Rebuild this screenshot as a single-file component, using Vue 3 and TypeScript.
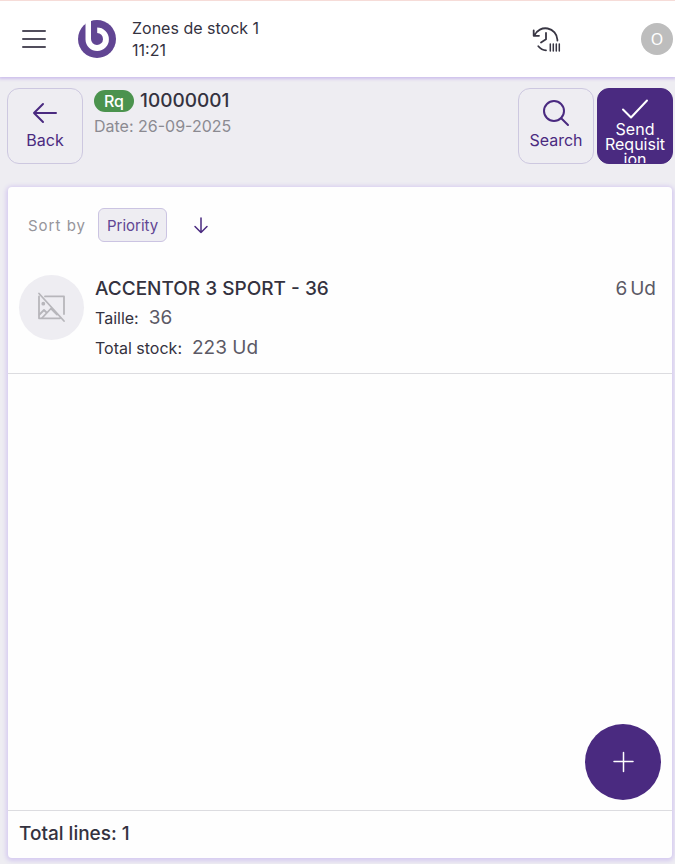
<script setup lang="ts">
import { ref } from 'vue'

interface Attribute {
  label: string
  value: string
}

interface Line {
  id: number
  name: string
  quantity: number
  unit: string
  attributes: Attribute[]
}

const descending = ref(true)

const lines = ref<Line[]>([
  {
    id: 1,
    name: 'ACCENTOR 3 SPORT - 36',
    quantity: 6,
    unit: 'Ud',
    attributes: [
      { label: 'Taille:', value: '36' },
      { label: 'Total stock:', value: '223 Ud' },
    ],
  },
])
</script>

<template>
  <div class="page">
    <header class="topbar">
      <button class="plain menu" type="button" aria-label="Menu">
        <svg width="24" height="20" viewBox="0 0 24 20">
          <path d="M1 2H23M1 10H23M1 18H23" fill="none" stroke="#514e5c" stroke-width="2" stroke-linecap="round" />
        </svg>
      </button>
      <svg class="logo" width="38" height="38" viewBox="0 0 38 38" aria-hidden="true">
        <circle cx="19" cy="19" r="19" fill="#614593" />
        <path d="M7.500 0V19.500A11.700 11.700 0 1 0 19.200 7.600V13A6 6 0 1 1 13 19V0Z" fill="#fff" />
      </svg>
      <div class="place">
        <span>Zones de stock 1</span>
        <span>11:21</span>
      </div>
      <button class="plain history" type="button" aria-label="Scan history">
        <svg width="29" height="26" viewBox="0 0 29 26" fill="none" stroke="#383643" stroke-width="1.800" stroke-linecap="round" stroke-linejoin="round">
          <path d="M1.700 4.500V9.800H7M2.500 9.300A12 12 0 0 1 25.400 13.700V14.500" />
          <path d="M14 7V13.300L9 16.500M6.300 20.300Q9.500 24.200 14 24.300" />
          <path d="M18.300 18V25M21.300 18V25M24.300 18V25M27.300 18V25" stroke-width="1.500" />
        </svg>
      </button>
      <button class="avatar" type="button" aria-label="Account">O</button>
    </header>

    <main class="content">
      <section class="actions">
        <button class="tile" type="button">
          <svg width="28" height="28" viewBox="0 0 28 28" fill="none" stroke="#4a2a80" stroke-width="2" stroke-linecap="round" stroke-linejoin="round">
            <path d="M12 5L3 14L12 23M3 14H25" />
          </svg>
          <span>Back</span>
        </button>
        <div class="document">
          <h1><span class="badge">Rq</span>10000001</h1>
          <p>Date: 26-09-2025</p>
        </div>
        <div class="group">
          <button class="tile" type="button">
            <svg width="28" height="28" viewBox="0 0 28 28" fill="none" stroke="#4a2a80" stroke-width="2" stroke-linecap="round">
              <circle cx="12" cy="12" r="10" />
              <path d="M19.200 19.200L26 26" />
            </svg>
            <span>Search</span>
          </button>
          <button class="tile primary" type="button">
            <svg width="28" height="28" viewBox="0 0 28 28" fill="none" stroke="#fff" stroke-width="2" stroke-linecap="round" stroke-linejoin="round">
              <path d="M2 15.500L10 23.500L26 6.500" />
            </svg>
            <span>Send Requisition</span>
          </button>
        </div>
      </section>

      <section class="card">
        <div class="sort">
          <span class="sort-label">Sort by</span>
          <button class="chip" type="button">Priority</button>
          <button class="plain direction" type="button" aria-label="Sort direction" @click="descending = !descending">
            <svg width="16" height="18" viewBox="0 0 16 18" :class="{ up: !descending }">
              <path d="M8 2V16.500M2 10.500L8 16.500L14 10.500" fill="none" stroke="#4a2a80" stroke-width="1.500" stroke-linecap="round" stroke-linejoin="round" />
            </svg>
          </button>
        </div>

        <ul class="lines">
          <li v-for="line in lines" :key="line.id" class="line">
            <span class="thumb">
              <svg width="29" height="31" viewBox="0 0 29 31" fill="none" stroke="#b7b6bb" stroke-width="1.800" stroke-linecap="round" stroke-linejoin="round">
                <path d="M2 4.500V26.300H23M8 4.400H27V22M2 1.500L27 29" />
                <path d="M2.500 22.500L7 18L9.500 20.500M5 26L14 16.500L20 22.500" />
                <circle cx="6.300" cy="11.700" r="1" fill="#b7b6bb" />
              </svg>
            </span>
            <div class="info">
              <h2>{{ line.name }}</h2>
              <dl>
                <div v-for="item in line.attributes" :key="item.label">
                  <dt>{{ item.label }}</dt>
                  <dd>{{ item.value }}</dd>
                </div>
              </dl>
            </div>
            <div class="quantity"><span>{{ line.quantity }}</span><span>{{ line.unit }}</span></div>
          </li>
        </ul>

        <div class="space">
          <button class="add" type="button" aria-label="Add line">
            <svg width="22" height="22" viewBox="0 0 22 22">
              <path d="M11.500 1.500V20.500M2 10.500H21" fill="none" stroke="#fff" stroke-width="1.500" stroke-linecap="round" />
            </svg>
          </button>
        </div>

        <footer class="total">Total lines: {{ lines.length }}</footer>
      </section>
    </main>
  </div>
</template>

<style>
body {
  background: #eeedf2;
}
</style>

<style scoped>
* {
  box-sizing: border-box;
}

.page {
  display: flex;
  flex-direction: column;
  min-height: 100vh;
  color: #34323f;
  font-family: Inter, 'Liberation Sans', sans-serif;
  font-size: 16px;
}

button {
  margin: 0;
  padding: 0;
  font: inherit;
  cursor: pointer;
}

svg {
  display: block;
  flex: none;
}

h1,
h2,
p,
ul,
dl,
dd {
  margin: 0;
  padding: 0;
}

.plain {
  border: 0;
  background: none;
}

.topbar {
  display: flex;
  align-items: center;
  height: 77px;
  padding: 0 2px 0 22px;
  border-top: 1px solid #f6dcd8;
  background: #fff;
  box-shadow: 0 1px 3px 1px #cdbfec;
}

.logo {
  margin-left: 32px;
}

.place {
  display: flex;
  flex-direction: column;
  margin-left: 16px;
  line-height: 22px;
}

.history {
  margin-left: auto;
}

.avatar {
  width: 32px;
  height: 32px;
  margin-left: 80px;
  border: 0;
  border-radius: 50%;
  background: #bdbdbd;
  color: #fff;
  font-family: 'Noto Sans', sans-serif;
}

.content {
  display: flex;
  flex: 1;
  flex-direction: column;
  gap: 23px;
  padding: 11px 2px 6px 7px;
}

.actions {
  display: flex;
  gap: 11px;
}

.tile {
  display: flex;
  flex: none;
  flex-direction: column;
  align-items: center;
  gap: 3px;
  width: 76px;
  height: 76px;
  padding-top: 10px;
  border: 1px solid #cdc8e0;
  border-radius: 12px;
  background: none;
  color: #4a2a80;
  line-height: 20px;
}

.primary {
  gap: 0;
  padding: 5px 6px 0;
  border-color: #4a2a80;
  background: #4a2a80;
  color: #fff;
  line-height: 15px;
  overflow: hidden;
}

.primary span {
  width: 100%;
  word-break: break-word;
}

.document {
  flex: 1;
}

h1 {
  display: flex;
  align-items: center;
  gap: 6px;
  font-size: 19px;
  font-weight: 500;
  line-height: 26px;
}

.badge {
  width: 40px;
  border-radius: 11px;
  background: #4b934e;
  color: #fff;
  font-size: 16px;
  line-height: 22px;
  text-align: center;
}

.document p {
  color: #8b8a91;
  line-height: 24px;
}

.group {
  display: flex;
  gap: 3px;
}

.card {
  display: flex;
  flex: 1;
  flex-direction: column;
  margin: 0 1px;
  border-radius: 4px;
  background: #fefefe;
  box-shadow: 0 1px 4px 2px #d6cbf0;
}

.sort {
  display: flex;
  align-items: center;
  padding: 21px 20px 22px;
}

.sort-label {
  color: #96959b;
  font-size: 15px;
  letter-spacing: 1px;
}

.chip {
  height: 34px;
  margin-left: 12px;
  padding: 0 8px;
  border: 1px solid #cbc4e2;
  border-radius: 6px;
  background: #eeedf2;
  color: #614593;
  font-size: 15px;
}

.direction {
  margin-left: 26px;
}

.up {
  transform: rotate(180deg);
}

.lines {
  list-style: none;
}

.line {
  display: flex;
  padding: 11px 16px 10px 11px;
  border-bottom: 1px solid #dcdce0;
}

.thumb {
  display: grid;
  place-items: center;
  width: 65px;
  height: 65px;
  border-radius: 50%;
  background: #eeedf2;
}

.info {
  flex: 1;
  margin-left: 11px;
}

h2 {
  font-size: 19px;
  font-weight: 500;
  line-height: 28px;
}

dl > div {
  display: flex;
  align-items: baseline;
  gap: 10px;
  line-height: 30px;
}

dd,
.quantity {
  color: #5b5965;
  font-size: 19px;
}

.quantity {
  display: flex;
  gap: 3px;
  line-height: 28px;
}

.space {
  display: flex;
  flex: 1;
  align-items: flex-end;
  justify-content: flex-end;
  padding: 10px 11px;
}

.add {
  display: grid;
  place-items: center;
  width: 76px;
  height: 76px;
  border: 0;
  border-radius: 50%;
  background: #4a2a80;
}

.total {
  padding: 0 11px 2px;
  border-top: 1px solid #dcdce0;
  font-size: 19px;
  font-weight: 500;
  line-height: 45px;
}
</style>
